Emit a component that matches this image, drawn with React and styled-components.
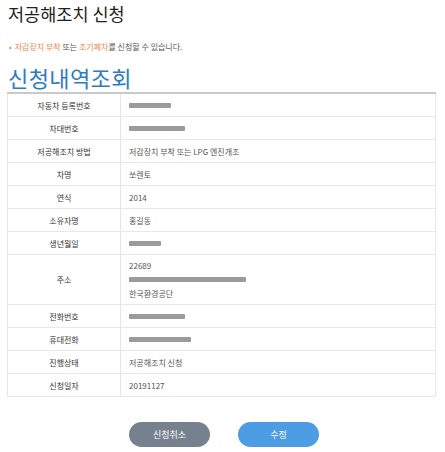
import React from "react";
import styled, { createGlobalStyle } from "styled-components";

const rows = [
  { label: "자동차 등록번호", mask: [42] },
  { label: "차대번호", mask: [56] },
  { label: "저공해조치 방법", value: "저감장치 부착 또는 LPG 엔진개조" },
  { label: "차명", value: "쏘렌토" },
  { label: "연식", value: "2014" },
  { label: "소유자명", value: "홍길동" },
  { label: "생년월일", mask: [32] },
  { label: "주소", address: true },
  { label: "전화번호", mask: [56] },
  { label: "휴대전화", mask: [62] },
  { label: "진행상태", value: "저공해조치 신청" },
  { label: "신청일자", value: "20191127" },
];

const App = () => {
  return (
    <>
      <GlobalStyle />
      <Page>
        <Title>저공해조치 신청</Title>
        <Notice>
          <Bullet>•</Bullet>
          <Orange>저감장치 부착</Orange> 또는 <Orange>조기폐차</Orange>를 신청할 수 있습니다.
        </Notice>
        <SubTitle>신청내역조회</SubTitle>
        <Table>
          <tbody>
            {rows.map((row) => (
              <tr key={row.label}>
                <Th>{row.label}</Th>
                <Td>
                  {row.value}
                  {row.mask && <Mask $width={row.mask[0]} />}
                  {row.address && (
                    <AddressBox>
                      <span>22689</span>
                      <Mask $width={117} />
                      <span>한국환경공단</span>
                    </AddressBox>
                  )}
                </Td>
              </tr>
            ))}
          </tbody>
        </Table>
        <Buttons>
          <Button $variant="gray">신청취소</Button>
          <Button $variant="blue">수정</Button>
        </Buttons>
      </Page>
    </>
  );
};

const GlobalStyle = createGlobalStyle`
  body {
    margin: 0;
    background: #fff;
    font-family: "Noto Sans CJK KR", "Noto Sans", sans-serif;
    color: #333;
  }
`;
const Page = styled.div`
  width: 445px;
  padding: 2px 9px 0 7px;
  box-sizing: border-box;
`;
const Title = styled.h1`
  margin: 0 0 0 1px;
  font-size: 17.5px;
  font-weight: 400;
  line-height: 24px;
  color: #222;
`;
const Notice = styled.p`
  margin: 16px 0 0 2px;
  font-size: 8px;
  line-height: 10px;
  color: #555;
`;
const Bullet = styled.span`
  color: #f08a4b;
  margin-right: 3px;
`;
const Orange = styled.span`
  color: #f08a4b;
`;
const SubTitle = styled.h2`
  margin: 11px 0 0 1px;
  font-size: 22px;
  font-weight: 400;
  line-height: 28px;
  color: #2b7cc4;
  letter-spacing: 0.4px;
`;
const Table = styled.table`
  width: 429px;
  margin-top: 1px;
  border-collapse: collapse;
  border-top: 2px solid #c9c9c9;
  border-left: 1px solid #e8e8e8;
  border-right: 1px solid #e8e8e8;
  font-size: 8px;
`;
const Th = styled.th`
  width: 112px;
  height: 22px;
  padding: 0;
  font-weight: 400;
  color: #333;
  border-right: 1px solid #e5e5e5;
  border-bottom: 1px solid #e8e8e8;
`;
const Td = styled.td`
  padding: 0 0 0 8px;
  color: #555;
  border-bottom: 1px solid #e8e8e8;
`;
const Mask = styled.span`
  display: block;
  width: ${(p) => p.$width}px;
  height: 5px;
  background: #8a8a8a;
  border-radius: 1px;
  opacity: 0.85;
`;
const AddressBox = styled.div`
  display: flex;
  flex-direction: column;
  justify-content: center;
  gap: 7px;
  padding: 6px 0;
  line-height: 9px;
`;
const Buttons = styled.div`
  display: flex;
  justify-content: center;
  gap: 28px;
  margin-top: 25px;
  padding-left: 5px;
`;
const Button = styled.button`
  width: 81px;
  height: 25px;
  border: none;
  border-radius: 13px;
  font-family: inherit;
  font-size: 9px;
  color: #fff;
  background: ${(p) => (p.$variant === "blue" ? "#4c9de4" : "#76818f")};
`;

export default App;
